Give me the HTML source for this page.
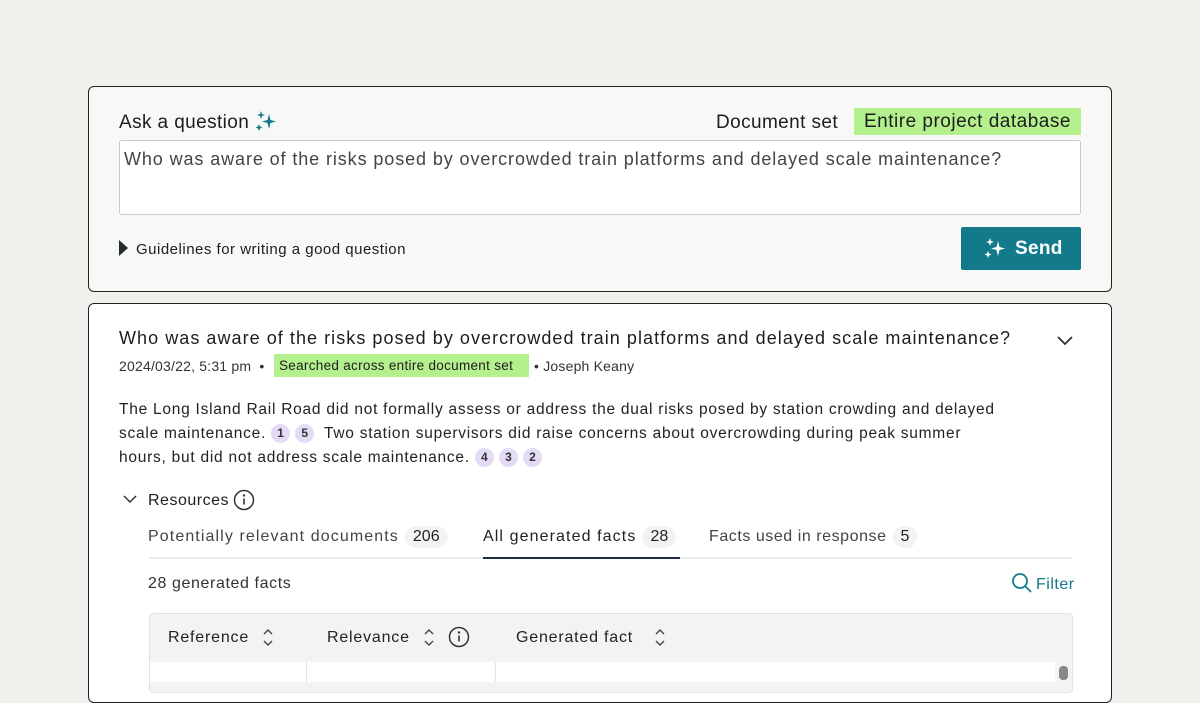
<!DOCTYPE html>
<html><head><meta charset="utf-8"><style>
*{box-sizing:border-box;margin:0;padding:0}
body{width:1200px;height:675px;overflow:hidden;background:#f1f0ec;font-family:"Liberation Sans",sans-serif;color:#1d1d1d;position:relative}
.abs{position:absolute;white-space:nowrap}
.card1{position:absolute;left:88px;top:86px;width:1024px;height:206px;background:#f8f8f6;border:1.5px solid #222;border-radius:6px}
.card2{position:absolute;left:88px;top:303px;width:1024px;height:400px;background:#fff;border:1.5px solid #222;border-radius:6px}
.pill{display:inline-block;background:#e4dcf7;color:#333;border-radius:50%;width:19px;height:19px;font-size:12px;text-align:center;line-height:19px;font-weight:bold;vertical-align:1px;letter-spacing:0}
.cnt{display:inline-block;background:#f3f3f1;border-radius:12px;padding:2px 8px;margin-left:4px;letter-spacing:0}
</style></head><body>
<div class="card1"></div>
<div class="abs" style="left:119px;top:112px;font-size:19px;letter-spacing:0.4px">Ask a question</div>
<svg class="abs" style="left:254px;top:110px" width="24" height="22" viewBox="0 0 24 22"><path fill="#137a8c" d="M15 4 L16.5 10 L22 11.5 L16.5 13 L15 19 L13.5 13 L8 11.5 L13.5 10Z M7 1 L8 4 L11 5 L8 6 L7 9 L6 6 L3 5 L6 4Z M5 14 L6 16.5 L8.5 17.5 L6 18.5 L5 21 L4 18.5 L1.5 17.5 L4 16.5Z"/></svg>
<div class="abs" style="left:716px;top:112px;font-size:19px;letter-spacing:0.4px">Document set</div>
<div class="abs" style="left:854px;top:108px;width:227px;height:27px;background:#b5f08f;font-size:19px;padding:3px 0 0 10px;letter-spacing:0.5px">Entire project database</div>
<div class="abs" style="left:119px;top:140px;width:962px;height:75px;background:#fff;border:1.5px solid #c9c9c6;border-radius:3px"></div>
<div class="abs" style="left:124px;top:149px;font-size:18px;color:#444;letter-spacing:0.9px">Who was aware of the risks posed by overcrowded train platforms and delayed scale maintenance?</div>
<svg class="abs" style="left:119px;top:240px" width="9" height="16"><path d="M0 0 L9 8 L0 16Z" fill="#1d2b33"/></svg>
<div class="abs" style="left:136px;top:241px;font-size:15px;letter-spacing:0.5px">Guidelines for writing a good question</div>
<div class="abs" style="left:961px;top:227px;width:120px;height:43px;background:#137a8c;border-radius:2px;color:#fff;font-size:19px;font-weight:bold;padding:11px 0 0 54px;letter-spacing:0.3px">Send</div>
<svg class="abs" style="left:983px;top:237px" width="24" height="22" viewBox="0 0 24 22"><path fill="#fff" d="M15 4 L16.5 10 L22 11.5 L16.5 13 L15 19 L13.5 13 L8 11.5 L13.5 10Z M7 1 L8 4 L11 5 L8 6 L7 9 L6 6 L3 5 L6 4Z M5 14 L6 16.5 L8.5 17.5 L6 18.5 L5 21 L4 18.5 L1.5 17.5 L4 16.5Z"/></svg>

<div class="card2"></div>
<div class="abs" style="left:119px;top:328px;font-size:18px;letter-spacing:1.05px">Who was aware of the risks posed by overcrowded train platforms and delayed scale maintenance?</div>
<svg class="abs" style="left:1056px;top:335px" width="18" height="12"><path d="M2 2 L9 9 L16 2" stroke="#333" stroke-width="1.8" fill="none"/></svg>
<div class="abs" style="left:119px;top:358px;font-size:14px;color:#333;letter-spacing:0.2px">2024/03/22, 5:31 pm &nbsp;•</div>
<div class="abs" style="left:274px;top:354px;width:255px;height:23px;background:#b5f08f;font-size:13.5px;padding:4px 0 0 5px;letter-spacing:0.3px">Searched across entire document set</div>
<div class="abs" style="left:534px;top:358px;font-size:14px;color:#333;letter-spacing:0.2px">• Joseph Keany</div>
<div class="abs" style="left:119px;top:398px;font-size:15.5px;line-height:24px;letter-spacing:0.75px;color:#222">The Long Island Rail Road did not formally assess or address the dual risks posed by station crowding and delayed<br>scale maintenance. <span class="pill">1</span> <span class="pill">5</span>&nbsp; Two station supervisors did raise concerns about overcrowding during peak summer<br>hours, but did not address scale maintenance. <span class="pill">4</span> <span class="pill">3</span> <span class="pill">2</span></div>
<svg class="abs" style="left:123px;top:495px" width="14" height="10"><path d="M1 1 L7 7 L13 1" stroke="#333" stroke-width="1.5" fill="none"/></svg>
<div class="abs" style="left:148px;top:492px;font-size:16px;letter-spacing:0.5px">Resources</div>
<svg class="abs" style="left:233px;top:489px" width="22" height="22"><circle cx="11" cy="11" r="9.5" stroke="#333" stroke-width="1.5" fill="none"/><circle cx="11" cy="6.5" r="1.2" fill="#333"/><path d="M11 9.5V15.5" stroke="#333" stroke-width="1.6"/></svg>
<div class="abs" style="left:148px;top:526px;font-size:16px;color:#444;letter-spacing:1.1px">Potentially relevant documents<span class="cnt" style="color:#222;margin-left:6px">206</span></div>
<div class="abs" style="left:483px;top:526px;font-size:16px;color:#222;letter-spacing:1.1px">All generated facts<span class="cnt" style="margin-left:6px">28</span></div>
<div class="abs" style="left:709px;top:526px;font-size:16px;color:#444;letter-spacing:0.55px">Facts used in response<span class="cnt" style="color:#222;margin-left:6px">5</span></div>
<div class="abs" style="left:149px;top:557px;width:923px;height:2px;background:#ececea"></div>
<div class="abs" style="left:483px;top:557px;width:197px;height:2px;background:#1c2c44"></div>
<div class="abs" style="left:148px;top:575px;font-size:16px;color:#333;letter-spacing:0.6px">28 generated facts</div>
<svg class="abs" style="left:1011px;top:572px" width="22" height="22"><circle cx="9" cy="9" r="7" stroke="#137a8c" stroke-width="1.8" fill="none"/><path d="M14 14 L20 20" stroke="#137a8c" stroke-width="1.8"/></svg>
<div class="abs" style="left:1036px;top:576px;font-size:16px;color:#137a8c;letter-spacing:0.5px">Filter</div>
<div class="abs" style="left:149px;top:613px;width:924px;height:80px;background:#f3f3f1;border:1px solid #e2e2e0;border-radius:4px"></div>
<div class="abs" style="left:150px;top:662px;width:922px;height:20px;background:#fff"></div>
<div class="abs" style="left:306px;top:662px;width:1px;height:20px;background:#e2e2e0"></div>
<div class="abs" style="left:495px;top:662px;width:1px;height:20px;background:#e2e2e0"></div>
<div class="abs" style="left:1055px;top:662px;width:17px;height:20px;background:#f3f3f1"></div>
<div class="abs" style="left:1059px;top:666px;width:9px;height:14px;background:#888;border-radius:4px"></div>
<div class="abs" style="left:168px;top:629px;font-size:16px;color:#222;letter-spacing:0.8px">Reference</div>
<div class="abs" style="left:327px;top:629px;font-size:16px;color:#222;letter-spacing:0.8px">Relevance</div>
<div class="abs" style="left:516px;top:629px;font-size:16px;color:#222;letter-spacing:0.8px">Generated fact</div>
<svg class="abs" style="left:262px;top:628px" width="12" height="20"><path d="M2 6 L6 2 L10 6 M2 13 L6 17 L10 13" stroke="#444" stroke-width="1.4" fill="none"/></svg>
<svg class="abs" style="left:423px;top:628px" width="12" height="20"><path d="M2 6 L6 2 L10 6 M2 13 L6 17 L10 13" stroke="#444" stroke-width="1.4" fill="none"/></svg>
<svg class="abs" style="left:654px;top:628px" width="12" height="20"><path d="M2 6 L6 2 L10 6 M2 13 L6 17 L10 13" stroke="#444" stroke-width="1.4" fill="none"/></svg>
<svg class="abs" style="left:448px;top:626px" width="22" height="22"><circle cx="11" cy="11" r="9.5" stroke="#333" stroke-width="1.5" fill="none"/><circle cx="11" cy="6.5" r="1.2" fill="#333"/><path d="M11 9.5V15.5" stroke="#333" stroke-width="1.6"/></svg>
</body></html>
